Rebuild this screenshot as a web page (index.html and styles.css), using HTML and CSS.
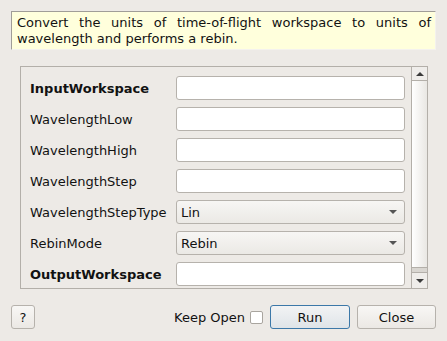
FILE: index.html
```html
<!DOCTYPE html>
<html lang="en">
<head>
    <meta charset="UTF-8">
    <title>ConvertUnits dialog</title>
<link rel="stylesheet" href="styles.css">
</head>
<body>
    <div class="dialog">
        <div class="description">
            Convert the units of time-of-flight workspace to units of wavelength and performs a rebin.
        </div>

        <div class="properties">
            <div class="prop-list">
                <label class="prop-label required">InputWorkspace</label>
                <input class="prop-input" type="text">

                <label class="prop-label">WavelengthLow</label>
                <input class="prop-input" type="text">

                <label class="prop-label">WavelengthHigh</label>
                <input class="prop-input" type="text">

                <label class="prop-label">WavelengthStep</label>
                <input class="prop-input" type="text">

                <label class="prop-label">WavelengthStepType</label>
                <div class="combo"><span>Lin</span><span class="combo-arrow"></span></div>

                <label class="prop-label">RebinMode</label>
                <div class="combo"><span>Rebin</span><span class="combo-arrow"></span></div>

                <label class="prop-label required">OutputWorkspace</label>
                <input class="prop-input" type="text">
            </div>
            <div class="scrollbar">
                <div class="scroll-btn"><span class="arrow-up"></span></div>
                <div class="scroll-handle"></div>
                <div class="scroll-track"></div>
                <div class="scroll-btn"><span class="arrow-down"></span></div>
            </div>
        </div>

        <div class="footer">
            <button class="btn help-btn">?</button>
            <div class="spacer"></div>
            <label class="keep-open">Keep Open <span class="checkbox"></span></label>
            <button class="btn run-btn">Run</button>
            <button class="btn">Close</button>
        </div>
    </div>
</body>
</html>
```

FILE: styles.css
```css
:root {
    --window-bg: #edeae6;
    --frame-border: #b3afa9;
    --input-border: #b6b2ac;
    --text: #121212;
    --tip-bg: #ffffdc;
    --focus-blue: #3c78a8;
}

body {
    margin: 0;
    padding: 0;
    background-color: var(--window-bg);
    font-family: "DejaVu Sans", sans-serif;
    font-size: 13px;
    color: var(--text);
}

.dialog {
    width: 447px;
    height: 341px;
    box-sizing: border-box;
    padding: 11px 11px 0 11px;
    display: flex;
    flex-direction: column;
}

.description {
    height: 39px;
    box-sizing: border-box;
    padding: 3px 4px 0 5px;
    line-height: 16px;
    background-color: var(--tip-bg);
    border-top: 1px solid #a09d98;
    border-left: 1px solid #a09d98;
    border-right: 1px solid #f4f2ee;
    border-bottom: 1px solid #f4f2ee;
    text-align: justify;
    text-align-last: left;
}

.properties {
    margin: 16px 8px 0 9px;
    height: 223px;
    box-sizing: border-box;
    border: 1px solid var(--frame-border);
    display: flex;
    overflow: hidden;
}

.prop-list {
    flex-grow: 1;
    display: grid;
    grid-template-columns: 146px 1fr;
    grid-auto-rows: 24px;
    row-gap: 7px;
    padding: 9px 6px 0 9px;
    align-items: center;
}

.prop-label {
    white-space: nowrap;
}

.prop-label.required {
    font-weight: bold;
}

.prop-input {
    height: 24px;
    box-sizing: border-box;
    margin: 0;
    border: 1px solid var(--input-border);
    border-radius: 3px;
    background: #ffffff;
    font: inherit;
}

.combo {
    height: 24px;
    box-sizing: border-box;
    border: 1px solid var(--input-border);
    border-radius: 3px;
    background: linear-gradient(#f7f6f4, #ebe9e5);
    display: flex;
    align-items: center;
    justify-content: space-between;
    padding: 0 7px 0 4px;
}

.combo-arrow {
    width: 0;
    height: 0;
    border-left: 4px solid transparent;
    border-right: 4px solid transparent;
    border-top: 4px solid #555555;
}

.scrollbar {
    width: 15px;
    border-left: 1px solid var(--frame-border);
    display: flex;
    flex-direction: column;
}

.scroll-btn {
    height: 13px;
    display: flex;
    align-items: center;
    justify-content: center;
    background: #efedea;
}

.scroll-btn:first-child {
    border-bottom: 1px solid var(--frame-border);
}

.scroll-btn:last-child {
    height: 15px;
    border-top: 1px solid var(--frame-border);
}

.arrow-up,
.arrow-down {
    width: 0;
    height: 0;
    border-left: 4px solid transparent;
    border-right: 4px solid transparent;
}

.arrow-up {
    border-bottom: 4px solid #3a3a3a;
}

.arrow-down {
    border-top: 4px solid #3a3a3a;
}

.scroll-handle {
    flex-grow: 1;
    background: linear-gradient(to right, #ffffff, #e9e7e3);
    border-bottom: 1px solid var(--frame-border);
}

.scroll-track {
    height: 4px;
    background: #d9d6d1;
}

.footer {
    margin-top: 16px;
    display: flex;
    align-items: center;
    gap: 7px;
}

.spacer {
    flex-grow: 1;
}

.btn {
    height: 24px;
    width: 79px;
    box-sizing: border-box;
    border: 1px solid var(--input-border);
    border-radius: 3px;
    background: linear-gradient(#f8f7f5, #ebe8e4);
    font: inherit;
    color: var(--text);
    padding: 0;
}

.help-btn {
    width: 24px;
}

.run-btn {
    width: 80px;
    border-color: var(--focus-blue);
    background: linear-gradient(#f2f3f4, #dfe4e8);
}

.keep-open {
    display: flex;
    align-items: center;
    gap: 5px;
}

.checkbox {
    width: 13px;
    height: 13px;
    box-sizing: border-box;
    border: 1px solid #a9a59f;
    border-radius: 2px;
    background: #ffffff;
}
```
